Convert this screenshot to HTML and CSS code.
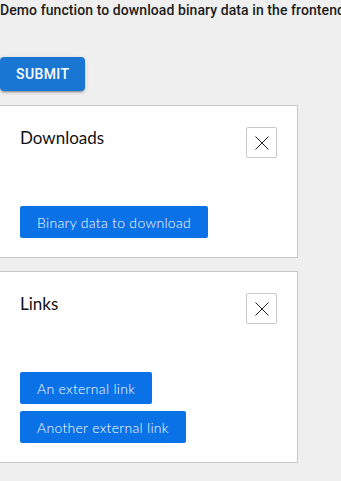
FILE: index.html
```html
<!DOCTYPE html>
<html lang="en">
<head>
    <meta charset="UTF-8">
    <meta name="viewport" content="width=device-width, initial-scale=1.0">
    <title>Download demo</title>
    <link rel="stylesheet" href="styles.css">
</head>
<body>

<p class="intro">Demo function to download binary data in the frontend</p>

<button class="submit">Submit</button>

<div class="panel">
    <div class="panel-head">
        <h2>Downloads</h2>
        <button class="close" aria-label="Close">
            <svg width="14" height="14" viewBox="0 0 14 14"><path d="M0.5 0.5L13.5 13.5M13.5 0.5L0.5 13.5" stroke="#222" stroke-width="1" fill="none"/></svg>
        </button>
    </div>
    <div class="actions">
        <button class="action">Binary data to download</button>
    </div>
</div>

<div class="panel">
    <div class="panel-head">
        <h2>Links</h2>
        <button class="close" aria-label="Close">
            <svg width="14" height="14" viewBox="0 0 14 14"><path d="M0.5 0.5L13.5 13.5M13.5 0.5L0.5 13.5" stroke="#222" stroke-width="1" fill="none"/></svg>
        </button>
    </div>
    <div class="actions">
        <button class="action">An external link</button>
        <button class="action">Another external link</button>
    </div>
</div>

</body>
</html>
```

FILE: styles.css
```css
body {
    font-family: Roboto, "Liberation Sans", sans-serif;
    background-color: #efefef;
    margin: 0;
    padding: 0;
    overflow: hidden;
}
.intro {
    margin: 0;
    font-size: 14px;
    font-weight: 500;
    line-height: 20px;
    letter-spacing: 0.08px;
    color: #1c1c1c;
    white-space: nowrap;
}
.submit {
    display: block;
    margin: 37px 0 0 0;
    padding: 8px 16px;
    font-family: Roboto, sans-serif;
    font-size: 14px;
    font-weight: 500;
    line-height: 18px;
    letter-spacing: 0.4px;
    text-transform: uppercase;
    background: #1976d2;
    color: #fff;
    border: none;
    border-radius: 4px;
    box-shadow: 0 3px 1px -2px rgba(0, 0, 0, 0.2), 0 2px 2px 0 rgba(0, 0, 0, 0.14), 0 1px 5px 0 rgba(0, 0, 0, 0.12);
    cursor: pointer;
}
.panel {
    box-sizing: border-box;
    width: 299px;
    margin: 14px 0 0 -1px;
    padding: 20px 20px 19px 20px;
    background: #fff;
    border: 1px solid #c8c8c8;
}
.panel + .panel {
    margin-top: 13px;
}
.panel-head {
    display: flex;
    justify-content: space-between;
    align-items: flex-start;
}
.panel-head h2 {
    margin: 0;
    font-family: Lato, "Open Sans", sans-serif;
    font-size: 17px;
    font-weight: 400;
    line-height: 24px;
    color: #111;
}
.close {
    display: flex;
    align-items: center;
    justify-content: center;
    width: 31px;
    height: 31px;
    margin-top: 1px;
    padding: 0;
    background: #fff;
    border: 1px solid #c8c8c8;
    border-radius: 2px;
    cursor: pointer;
}
.actions {
    display: flex;
    flex-direction: column;
    align-items: flex-start;
    gap: 7px;
    margin-top: 48px;
}
.action {
    height: 32px;
    padding: 0 17px;
    font-family: Lato, "Open Sans", sans-serif;
    font-size: 14px;
    font-weight: 300;
    letter-spacing: 0.3px;
    background: #0a71e6;
    color: #fff;
    border: none;
    border-radius: 2px;
    cursor: pointer;
}
```
